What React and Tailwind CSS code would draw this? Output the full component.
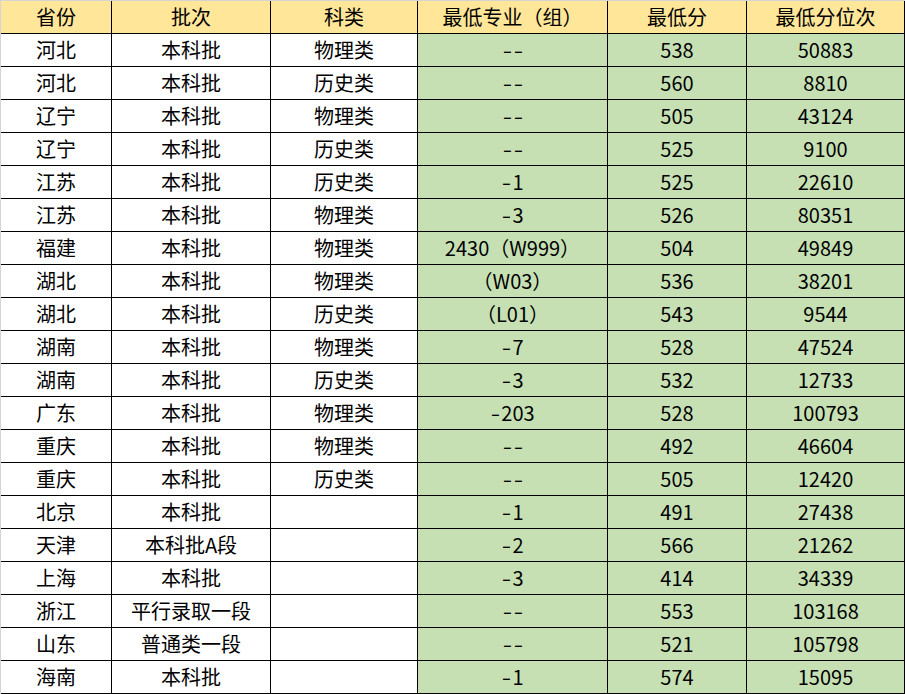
const header = ["省份", "批次", "科类", "最低专业（组）", "最低分", "最低分位次"];

const rows = [
  ["河北", "本科批", "物理类", "--", "538", "50883"],
  ["河北", "本科批", "历史类", "--", "560", "8810"],
  ["辽宁", "本科批", "物理类", "--", "505", "43124"],
  ["辽宁", "本科批", "历史类", "--", "525", "9100"],
  ["江苏", "本科批", "历史类", "-1", "525", "22610"],
  ["江苏", "本科批", "物理类", "-3", "526", "80351"],
  ["福建", "本科批", "物理类", "2430（W999）", "504", "49849"],
  ["湖北", "本科批", "物理类", "（W03）", "536", "38201"],
  ["湖北", "本科批", "历史类", "（L01）", "543", "9544"],
  ["湖南", "本科批", "物理类", "-7", "528", "47524"],
  ["湖南", "本科批", "历史类", "-3", "532", "12733"],
  ["广东", "本科批", "物理类", "-203", "528", "100793"],
  ["重庆", "本科批", "物理类", "--", "492", "46604"],
  ["重庆", "本科批", "历史类", "--", "505", "12420"],
  ["北京", "本科批", "", "-1", "491", "27438"],
  ["天津", "本科批A段", "", "-2", "566", "21262"],
  ["上海", "本科批", "", "-3", "414", "34339"],
  ["浙江", "平行录取一段", "", "--", "553", "103168"],
  ["山东", "普通类一段", "", "--", "521", "105798"],
  ["海南", "本科批", "", "-1", "574", "15095"],
];

// the hyphens in the sheet font are wider than in Noto, so stretch them a bit
function CellText({ text }) {
  const parts = text.split(/(-)/);
  return parts.map((p, i) =>
    p === "-" ? (
      <span key={i} className="inline-block w-[11px] text-center scale-x-[1.35]">
        -
      </span>
    ) : (
      <span key={i}>{p}</span>
    )
  );
}

export default function App() {
  return (
    <div
      className="w-[905px] h-[694px] bg-white text-black text-[20px] leading-none"
      style={{ fontFamily: '"Noto Sans CJK SC", "Noto Sans", sans-serif' }}
    >
      <div className="grid grid-cols-[111px_159px_147px_190px_139px_158px] border-l border-t border-[#d4d4d4]">
        {header.map((h, i) => (
          <div
            key={"h" + i}
            className="h-[33px] flex items-center justify-center bg-[#ffe699] border-r border-b border-black"
          >
            {h}
          </div>
        ))}
        {rows.map((r, ri) =>
          r.map((c, ci) => (
            <div
              key={ri + "-" + ci}
              className={
                "h-[33px] flex items-center justify-center border-r border-b border-black whitespace-nowrap " +
                (ci >= 3 ? "bg-[#c6e0b4]" : "bg-white")
              }
            >
              <CellText text={c} />
            </div>
          ))
        )}
      </div>
    </div>
  );
}
